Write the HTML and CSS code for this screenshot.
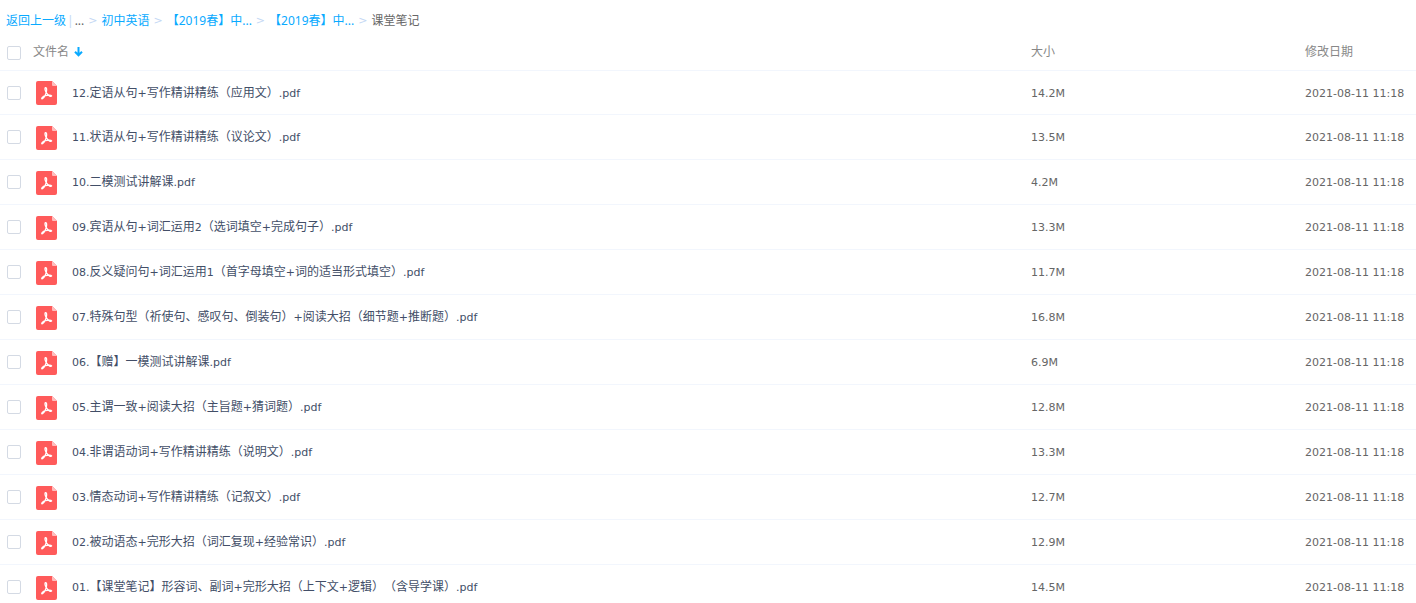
FILE: index.html
```html
<!DOCTYPE html>
<html lang="zh-CN">
<head>
  <meta charset="UTF-8">
  <meta name="viewport" content="width=device-width, initial-scale=1.0">
  <title>课堂笔记</title>
  <link rel="stylesheet" href="styles.css">
</head>
<body>
  <svg class="sprite" aria-hidden="true">
    <symbol id="icon-pdf" viewBox="0 0 21 24">
      <path fill="#ff5a5a" d="M2 0h14l5 5v17a2 2 0 0 1-2 2H2a2 2 0 0 1-2-2V2a2 2 0 0 1 2-2z"/>
      <path fill="#ffbdbd" d="M16 0l5 5h-4a1 1 0 0 1-1-1z"/>
      <path fill="none" stroke="#fff" stroke-width="1.300" stroke-linecap="round" stroke-linejoin="round" d="M9.300 6.600c1.600-.3 1.500 2.600 1 4.600-.7 2.700-2.600 6.200-4.200 6.700-1.200-.6.6-2.500 3.300-3.200 2.300-.6 5.600-.9 6.200.2-.7 1.300-3.600-.6-4.800-2.500-1.200-1.900-2.200-4.700-1.500-5.800z"/>
    </symbol>
  </svg>

  <nav class="breadcrumb">
    <a href="#">返回上一级</a>
    <span class="divider">|</span>
    <span class="more">...</span>
    <span class="arrow">&gt;</span>
    <a href="#">初中英语</a>
    <span class="arrow">&gt;</span>
    <a href="#">【2019春】中...</a>
    <span class="arrow">&gt;</span>
    <a href="#">【2019春】中...</a>
    <span class="arrow">&gt;</span>
    <span class="current">课堂笔记</span>
  </nav>

  <table class="file-list">
    <thead>
      <tr>
        <th class="col-check"><input type="checkbox" aria-label="全选"></th>
        <th class="col-name">文件名
          <svg class="sort" viewBox="0 0 9 10" aria-hidden="true"><path fill="none" stroke="#09aaff" stroke-width="2" d="M4.500 0v8M1 4.800l3.500 3.500L8 4.800"/></svg>
        </th>
        <th class="col-size">大小</th>
        <th class="col-date">修改日期</th>
      </tr>
    </thead>
    <tbody id="files"></tbody>
  </table>

  <script>
    const files = [
      ['12.定语从句+写作精讲精练（应用文）.pdf', '14.2M'],
      ['11.状语从句+写作精讲精练（议论文）.pdf', '13.5M'],
      ['10.二模测试讲解课.pdf', '4.2M'],
      ['09.宾语从句+词汇运用2（选词填空+完成句子）.pdf', '13.3M'],
      ['08.反义疑问句+词汇运用1（首字母填空+词的适当形式填空）.pdf', '11.7M'],
      ['07.特殊句型（祈使句、感叹句、倒装句）+阅读大招（细节题+推断题）.pdf', '16.8M'],
      ['06.【赠】一模测试讲解课.pdf', '6.9M'],
      ['05.主谓一致+阅读大招（主旨题+猜词题）.pdf', '12.8M'],
      ['04.非谓语动词+写作精讲精练（说明文）.pdf', '13.3M'],
      ['03.情态动词+写作精讲精练（记叙文）.pdf', '12.7M'],
      ['02.被动语态+完形大招（词汇复现+经验常识）.pdf', '12.9M'],
      ['01.【课堂笔记】形容词、副词+完形大招（上下文+逻辑）（含导学课）.pdf', '14.5M']
    ];
    const modified = '2021-08-11 11:18';

    // latin runs get their own font size
    function formatName(name) {
      return name.replace(/[\x21-\x7e]+/g, '<span class="latin">$&</span>');
    }

    document.getElementById('files').innerHTML = files.map(([name, size], i) => `
      <tr>
        <td class="col-check"><input type="checkbox" id="file-${i}"></td>
        <td class="col-name">
          <label class="file" for="file-${i}">
            <svg class="file-icon" aria-hidden="true"><use href="#icon-pdf"/></svg>
            <span class="file-name">${formatName(name)}</span>
          </label>
        </td>
        <td class="col-size latin">${size}</td>
        <td class="col-date latin">${modified}</td>
      </tr>`).join('');
  </script>
</body>
</html>
```
FILE: styles.css
```css
* {
  box-sizing: border-box;
}
body {
  margin: 0;
  font-family: "Noto Sans", "Noto Sans CJK SC", sans-serif;
  font-size: 12px;
  line-height: 18px;
  text-spacing-trim: space-all;
  color: #666;
  background-color: #fff;
}
.sprite {
  display: none;
}
a {
  color: #09aaff;
  text-decoration: none;
}
.breadcrumb {
  display: flex;
  gap: 4px;
  padding: 12px 6px 4px;
  white-space: nowrap;
}
.divider,
.arrow {
  color: #c4d8f4;
}
.divider {
  margin: 0 -3px;
}
.arrow,
.latin {
  font-family: "DejaVu Sans", sans-serif;
  font-size: 11px;
}
.file-list {
  width: 100%;
  table-layout: fixed;
  border-collapse: separate;
  border-spacing: 0;
}
th,
td {
  height: 45px;
  padding: 0;
  border-bottom: 1px solid #f2f6fd;
  text-align: left;
  vertical-align: middle;
  white-space: nowrap;
}
th {
  height: 37px;
  font-weight: normal;
  color: #888;
}
td.col-name {
  padding-top: 1px;
}
th.col-check,
td.latin {
  padding-top: 2px;
}
tbody tr:first-child td {
  height: 44px;
}
.col-check {
  width: 33px;
  padding-left: 7px;
}
.col-size {
  width: 274px;
}
.col-date {
  width: 111px;
}
input[type="checkbox"] {
  display: block;
  appearance: none;
  width: 14px;
  height: 14px;
  margin: 0;
  border: 1px solid #d4dae4;
  border-radius: 2px;
  background-color: #fff;
}
input[type="checkbox"]:checked {
  background-color: #09aaff;
}
.sort {
  width: 9px;
  height: 10px;
  margin-left: 2px;
  vertical-align: -1px;
}
.file {
  display: flex;
  align-items: center;
  gap: 15px;
  padding-left: 3px;
}
.file-icon {
  flex: none;
  width: 21px;
  height: 24px;
}
.file-name {
  color: #424e67;
}
```
